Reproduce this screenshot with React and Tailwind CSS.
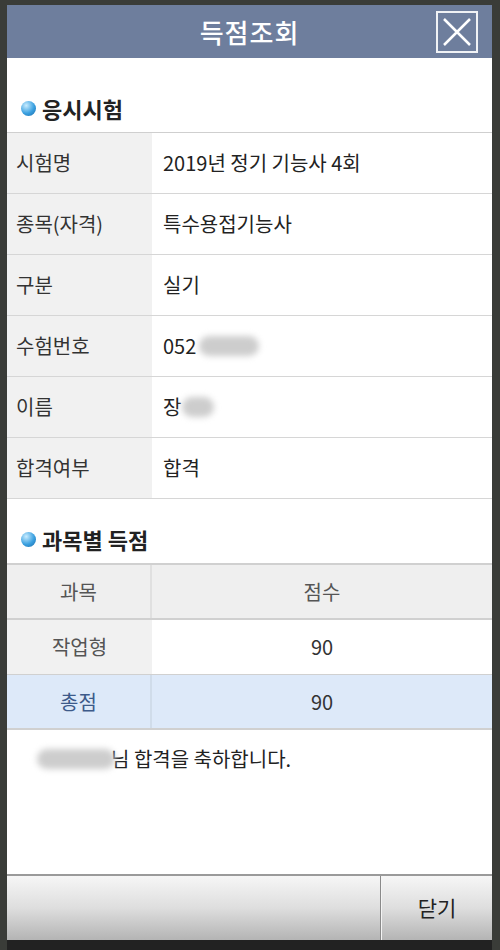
import React from 'react';

const font = { fontFamily: '"Noto Sans CJK KR", "Noto Sans", sans-serif' };

function Bullet() {
  return (
    <span className="inline-block w-[15px] h-[15px] rounded-full bg-[radial-gradient(circle_at_35%_30%,#c8ecff_0%,#3aa0e0_55%,#1a6aa8_100%)] mr-[6px]" />
  );
}

function SectionTitle({ children, top }) {
  return (
    <div className={`flex items-center pl-[14px] pb-[11px] ${top}`}>
      <Bullet />
      <span className="text-[22px] leading-[26px] font-bold text-[#222]">{children}</span>
    </div>
  );
}

function InfoRow({ label, children }) {
  return (
    <div className="flex h-[61px] border-b border-[#d6d6d6]">
      <div className="w-[145px] bg-[#f1f1f1] flex items-center pl-[9px] text-[20px] text-[#333]">{label}</div>
      <div className="flex-1 flex items-center pl-[11px] text-[20px] text-[#222]">{children}</div>
    </div>
  );
}

function Blur({ w }) {
  return <span className={`inline-block h-[20px] rounded-full bg-[#cdcdcd] blur-[3px] ${w}`} />;
}

export default function App() {
  const info = [
    ['시험명', '2019년 정기 기능사 4회'],
    ['종목(자격)', '특수용접기능사'],
    ['구분', '실기'],
  ];

  return (
    <div className="w-[500px] h-[950px] bg-[#3a3c38] pt-[5px] pl-[7px] pr-[8px] flex flex-col" style={font}>
      {/* Title bar */}
      <div className="relative h-[53px] bg-[#6e7e9d] flex items-center justify-center">
        <span className="text-[26px] text-white font-medium tracking-[1px]">득점조회</span>
        <button className="absolute right-[14px] top-[6px] w-[42px] h-[42px] border-2 border-white/90 flex items-center justify-center">
          <svg width="34" height="34" viewBox="0 0 34 34">
            <path d="M4 4 L30 30 M30 4 L4 30" stroke="white" strokeWidth="2.5" />
          </svg>
        </button>
      </div>

      {/* Body */}
      <div className="flex-1 bg-white flex flex-col">
        <SectionTitle top="pt-[37px]">응시시험</SectionTitle>
        <div className="border-t border-[#cfcfcf]">
          {info.map(([l, v]) => (
            <InfoRow key={l} label={l}>{v}</InfoRow>
          ))}
          <InfoRow label="수험번호">
            052<Blur w="w-[60px] ml-[3px]" />
          </InfoRow>
          <InfoRow label="이름">
            장<Blur w="w-[32px] ml-[1px]" />
          </InfoRow>
          <InfoRow label="합격여부">합격</InfoRow>
        </div>

        <SectionTitle top="pt-[27px]">과목별 득점</SectionTitle>
        <div className="border-t-2 border-[#d0d0d0] text-[20px]">
          <div className="flex h-[55px] border-b-2 border-[#d0d0d0] bg-[#efefef] text-[#555]">
            <div className="w-[145px] flex items-center justify-center border-r-2 border-[#e0e0e0]">과목</div>
            <div className="flex-1 flex items-center justify-center">점수</div>
          </div>
          <div className="flex h-[55px] border-b border-[#d0d0d0] text-[#333]">
            <div className="w-[145px] flex items-center justify-center bg-[#f1f1f1] text-[#555]">작업형</div>
            <div className="flex-1 flex items-center justify-center">90</div>
          </div>
          <div className="flex h-[55px] border-b-2 border-[#d0d0d0] bg-[#dde9f9] text-[#333]">
            <div className="w-[145px] flex items-center justify-center border-r-2 border-[#d0dcea] text-[#3d5a8a]">총점</div>
            <div className="flex-1 flex items-center justify-center">90</div>
          </div>
        </div>

        <div className="flex items-center pl-[30px] pt-[16px] text-[20px] leading-[26px] text-[#222]">
          <Blur w="w-[78px]" />
          <span className="-ml-[4px]">님 합격을 축하합니다.</span>
        </div>
        <div className="flex-1" />
      </div>

      {/* Button bar */}
      <div className="h-[66px] flex border-t-2 border-[#9a9a9a] bg-gradient-to-b from-[#f6f6f6] via-[#dedede] to-[#b4b4b4]">
        <button className="flex-1 border-r border-[#8a8a8a]" />
        <button className="w-[111px] flex items-center justify-center text-[21px] text-[#222] border-l border-[#f4f4f4]">닫기</button>
      </div>
      <div className="h-[10px] bg-[#222]" />
    </div>
  );
}
